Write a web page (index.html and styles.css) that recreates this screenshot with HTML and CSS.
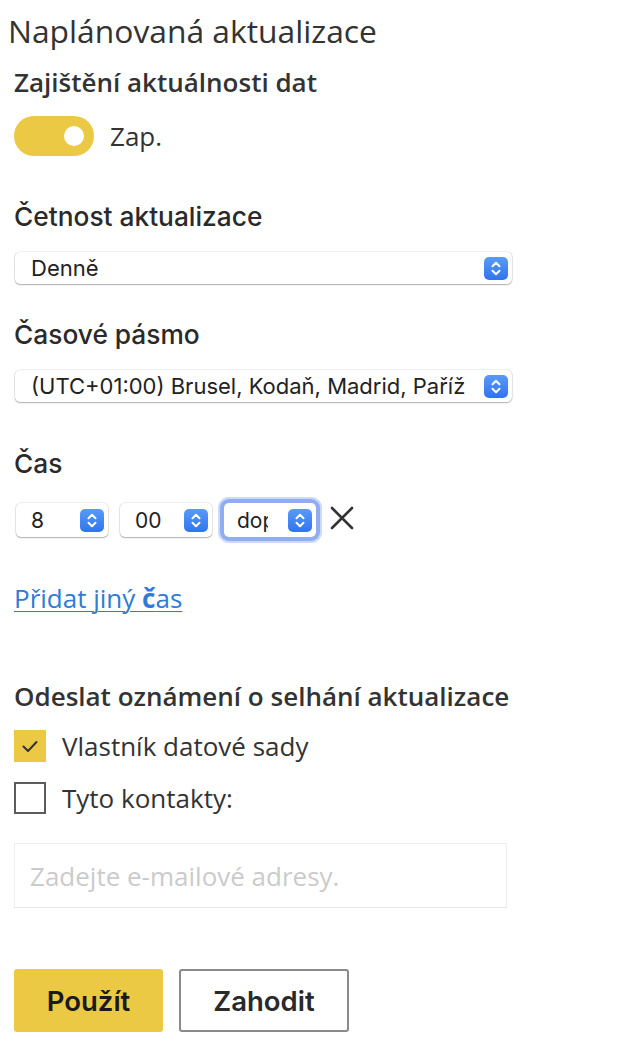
FILE: index.html
```html
<!DOCTYPE html>
<html lang="cs">
<head>
<meta charset="utf-8">
<title>Naplánovaná aktualizace</title>
<link rel="stylesheet" href="styles.css">
</head>
<body>
<div class="page">
  <h1 class="title">Naplánovaná aktualizace</h1>
  <div class="content">
    <h2 class="section-head">Zajištění aktuálnosti dat</h2>
    <div class="toggle-row">
      <span class="toggle"><span class="knob"></span></span>
      <span class="toggle-label">Zap.</span>
    </div>

    <div class="field-label first">Četnost aktualizace</div>
    <div class="select wide">
      <span class="select-text">Denně</span>
      <span class="stepper"><svg viewBox="0 0 24 23" width="24" height="23"><path d="M8.5 9.2 L12 5.8 L15.5 9.2 M8.5 13.8 L12 17.2 L15.5 13.8" fill="none" stroke="#fff" stroke-width="2" stroke-linecap="round" stroke-linejoin="round"/></svg></span>
    </div>

    <div class="field-label">Časové pásmo</div>
    <div class="select wide">
      <span class="select-text">(UTC+01:00) Brusel, Kodaň, Madrid, Paříž</span>
      <span class="stepper"><svg viewBox="0 0 24 23" width="24" height="23"><path d="M8.5 9.2 L12 5.8 L15.5 9.2 M8.5 13.8 L12 17.2 L15.5 13.8" fill="none" stroke="#fff" stroke-width="2" stroke-linecap="round" stroke-linejoin="round"/></svg></span>
    </div>

    <div class="field-label time-label">Čas</div>
    <div class="time-row">
      <div class="select small">
        <span class="select-text">8</span>
        <span class="stepper"><svg viewBox="0 0 24 23" width="24" height="23"><path d="M8.5 9.2 L12 5.8 L15.5 9.2 M8.5 13.8 L12 17.2 L15.5 13.8" fill="none" stroke="#fff" stroke-width="2" stroke-linecap="round" stroke-linejoin="round"/></svg></span>
      </div>
      <div class="select small">
        <span class="select-text">00</span>
        <span class="stepper"><svg viewBox="0 0 24 23" width="24" height="23"><path d="M8.5 9.2 L12 5.8 L15.5 9.2 M8.5 13.8 L12 17.2 L15.5 13.8" fill="none" stroke="#fff" stroke-width="2" stroke-linecap="round" stroke-linejoin="round"/></svg></span>
      </div>
      <div class="select small focused">
        <span class="select-text clip">dop</span>
        <span class="stepper"><svg viewBox="0 0 24 23" width="24" height="23"><path d="M8.5 9.2 L12 5.8 L15.5 9.2 M8.5 13.8 L12 17.2 L15.5 13.8" fill="none" stroke="#fff" stroke-width="2" stroke-linecap="round" stroke-linejoin="round"/></svg></span>
      </div>
      <svg class="remove" viewBox="0 0 24 24" width="24" height="24"><path d="M2 2 L22 22 M22 2 L2 22" stroke="#333" stroke-width="2.6" stroke-linecap="round"/></svg>
    </div>

    <a class="add-link" href="#">Přidat jiný <b>č</b>as</a>

    <h2 class="section-head notify">Odeslat oznámení o selhání aktualizace</h2>
    <label class="check-row">
      <span class="checkbox checked"><svg viewBox="0 0 32 32" width="32" height="32"><path d="M9.5 16.5 L14 21 L22.5 12" fill="none" stroke="#333" stroke-width="2" stroke-linecap="round" stroke-linejoin="round"/></svg></span>
      <span class="check-label">Vlastník datové sady</span>
    </label>
    <label class="check-row second">
      <span class="checkbox"></span>
      <span class="check-label">Tyto kontakty:</span>
    </label>

    <div class="email-input"><span class="placeholder">Zadejte e-mailové adresy.</span></div>

    <div class="buttons">
      <button class="btn primary">Použít</button>
      <button class="btn secondary">Zahodit</button>
    </div>
  </div>
</div>
</body>
</html>
```

FILE: styles.css
```css
* { box-sizing: border-box; }
html, body { margin: 0; padding: 0; background: #fff; }
body {
  font-family: "Open Sans", "Noto Sans", sans-serif;
  color: #333;
}
.page { width: 630px; }
.title {
  margin: 0;
  padding: 13px 0 0 8px;
  font-size: 31.8px;
  line-height: 36px;
  font-weight: 400;
  color: #333;
}
.content { padding-left: 14px; display: flex; flex-direction: column; align-items: flex-start; }
.section-head {
  margin: 18px 0 0 0;
  font-size: 26px;
  line-height: 30px;
  font-weight: 600;
  color: #333;
}
.toggle-row { display: flex; align-items: center; margin-top: 19px; height: 40px; }
.toggle {
  width: 80px; height: 40px; border-radius: 20px;
  background: #ebc944;
  display: flex; align-items: center; justify-content: flex-end;
  padding-right: 10px;
}
.knob { width: 20px; height: 20px; border-radius: 50%; background: #fff; }
.toggle-label { margin-left: 16px; font-size: 26px; color: #333; }

.field-label {
  font-family: Inter, "Noto Sans", sans-serif;
  font-size: 26.3px;
  line-height: 30px;
  font-weight: 500;
  color: #2a2a2a;
  margin-top: 36px;
}
.field-label.first { margin-top: 46px; }
.field-label.time-label { margin-top: 47px; }

.select {
  display: flex; align-items: center;
  height: 32px;
  background: #fff;
  border-radius: 5px;
  box-shadow: 0 0 0 0.5px rgba(0,0,0,0.12), 0 1px 1.5px rgba(0,0,0,0.28);
  font-family: Inter, "Noto Sans", sans-serif;
  font-size: 22px;
  color: #222;
  margin-top: 20px;
  margin-left: 1px;
}
.select.wide { width: 497px; padding: 0 4px 0 16px; }
.select-text { flex: 1; white-space: nowrap; overflow: hidden; }
.stepper {
  width: 24px; height: 23px; border-radius: 5px;
  background: linear-gradient(#5a9bf7, #2f74ee);
  display: flex; flex: none;
}
.time-row { display: flex; align-items: center; margin-top: 24px; gap: 12px; }
.time-row .select { margin: 0; }
.select.small { height: 34px; width: 92px; padding: 0 4px 0 15px; font-size: 21px; }
.time-row .select.small:first-child { margin-left: 2px; }
.select.small.focused {
  box-shadow: 0 0 0 4px #92acf2, 0 0 0 6px rgba(160,185,245,0.55);
  padding-left: 13px;
}
.select-text.clip { max-width: 31px; flex: none; margin-right: auto; }
.remove { margin-left: 2px; margin-top: -4px; }

.add-link {
  margin-top: 46px;
  font-size: 26px;
  line-height: 30px;
  color: #2f7bd8;
  text-decoration: underline;
  text-decoration-thickness: 1px;
  text-underline-offset: 3px;
}
.add-link b { font-weight: 700; }

.section-head.notify { margin-top: 68px; }
.check-row { display: flex; align-items: center; margin-top: 19px; height: 32px; }
.check-row.second { margin-top: 20px; }
.checkbox {
  width: 32px; height: 32px; flex: none;
  border: 2px solid #5c5c5c; background: #fff; display: flex;
}
.checkbox.checked { border: none; background: #ebc944; }
.check-label { margin-left: 16px; font-size: 26px; color: #333; }

.email-input {
  margin-top: 29px;
  width: 493px; height: 65px;
  border: 1px solid #eeeeee;
  border-bottom-color: #e6e6e6;
  display: flex; align-items: center;
  padding-left: 15px;
}
.placeholder { font-size: 26px; color: #cbcbcb; }

.buttons { display: flex; gap: 16px; margin-top: 61px; }
.btn {
  height: 63px;
  border-radius: 3px;
  font-family: Inter, "Noto Sans", sans-serif;
  font-size: 27.5px;
  font-weight: 600;
  color: #1a1a1a;
  cursor: pointer;
}
.btn.primary { width: 149px; background: #ebc944; border: none; }
.btn.secondary { width: 170px; background: #fff; border: 2px solid #8a8a8a; color: #2a2a2a; }
```
